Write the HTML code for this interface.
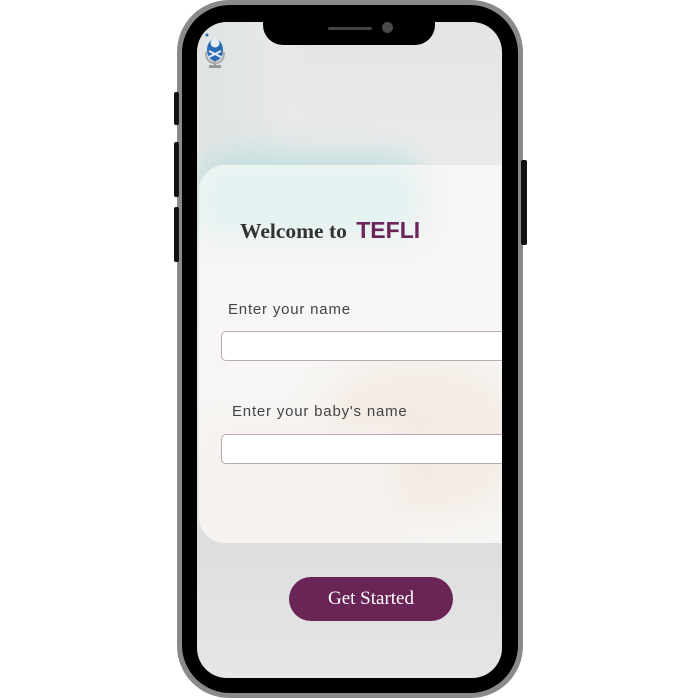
<!DOCTYPE html>
<html><head><style>
*{margin:0;padding:0;box-sizing:border-box}
body{width:700px;height:700px;background:#fff;position:relative;overflow:hidden;font-family:"Liberation Sans",sans-serif}
.phone{position:absolute;left:177px;top:0;width:346px;height:698px;background:#8a8a8a;border-radius:52px}
.bez{position:absolute;left:182px;top:5px;width:336px;height:688px;background:#000;border-radius:48px}
.btn{position:absolute;background:#111;border-radius:2px}
.screen{position:absolute;left:197px;top:22px;width:305px;height:656px;border-radius:30px;overflow:hidden;
background:linear-gradient(180deg,#e4e5e5 0%,#eaeaea 20%,#e8e8e8 60%,#dedede 80%,#e6e6e6 100%)}
.notch{position:absolute;left:263px;top:22px;width:172px;height:23px;background:#000;border-radius:0 0 20px 20px}
.card{position:absolute;left:2px;top:143px;width:320px;height:378px;border-radius:26px 0 0 26px;overflow:hidden;background:#f7f6f4}
.inp{position:absolute;left:22px;width:300px;height:30px;background:#fff;border:1px solid #b9a9b3;border-radius:5px}
.lbl{position:absolute;font-size:15px;color:#444;letter-spacing:.8px}
</style></head><body>
<div class="phone"></div>
<div class="btn" style="left:174px;top:92px;width:5px;height:33px"></div>
<div class="btn" style="left:174px;top:142px;width:5px;height:55px"></div>
<div class="btn" style="left:174px;top:207px;width:5px;height:55px"></div>
<div class="btn" style="left:521px;top:160px;width:6px;height:85px"></div>
<div class="bez"></div>
<div class="screen">
  <div style="position:absolute;left:0;top:0;width:100px;height:300px;background:linear-gradient(90deg,#dfe3e3,#e8e9e9);filter:blur(6px)"></div>
  <div style="position:absolute;left:0;top:130px;width:230px;height:100px;background:#b5dcde;border-radius:40px;filter:blur(14px);opacity:.7"></div>
  <div class="card">
    <div style="position:absolute;left:0;top:0;width:220px;height:70px;background:#e2f1f1;filter:blur(16px)"></div>
    <div style="position:absolute;left:120px;top:200px;width:200px;height:150px;background:#f4ebe4;border-radius:80px;filter:blur(18px)"></div>
    <div style="position:absolute;left:0;top:260px;width:200px;height:120px;background:#f6f1ee;filter:blur(12px)"></div>
    <div style="position:absolute;left:41px;top:52px;font-family:'Liberation Serif',serif;font-weight:bold;font-size:21.5px;color:#333;white-space:nowrap">Welcome to <span style="font-family:'Liberation Sans',sans-serif;color:#6b2559;font-size:23px;margin-left:4px">TEFLI</span></div>
    <div class="lbl" style="left:29px;top:136px">Enter your name</div>
    <div class="inp" style="top:166px"></div>
    <div class="lbl" style="left:33px;top:238px">Enter your baby's name</div>
    <div class="inp" style="top:269px"></div>
  </div>
  <div style="position:absolute;left:92px;top:555px;width:164px;height:44px;background:#6a2557;border-radius:22px;color:#fff;font-family:'Liberation Serif',serif;font-size:19px;text-align:center;line-height:44px">Get Started</div>
  <svg style="position:absolute;left:6px;top:10px" width="26" height="40" viewBox="0 0 26 40">
    <circle cx="4" cy="3" r="1.5" fill="#2a6bb5"/>
    <rect x="6" y="33" width="12" height="3" fill="#999"/>
    <rect x="11" y="28" width="2" height="6" fill="#999"/>
    <path d="M3 20 Q3 31 12 31 Q21 31 21 20" fill="none" stroke="#aaa" stroke-width="2"/>
    <ellipse cx="12" cy="18" rx="8" ry="11" fill="#2a6bb5"/>
    <circle cx="12" cy="11" r="4.5" fill="#e6eef7"/>
    <path d="M6 19 L18 25 M18 19 L6 25" stroke="#e6eef7" stroke-width="2"/>
  </svg>
</div>
<div class="notch"></div>
<div style="position:absolute;left:328px;top:27px;width:44px;height:3px;background:#444;border-radius:2px"></div>
<div style="position:absolute;left:382px;top:22px;width:11px;height:11px;background:#4a4a4a;border-radius:50%"></div>
</body></html>
